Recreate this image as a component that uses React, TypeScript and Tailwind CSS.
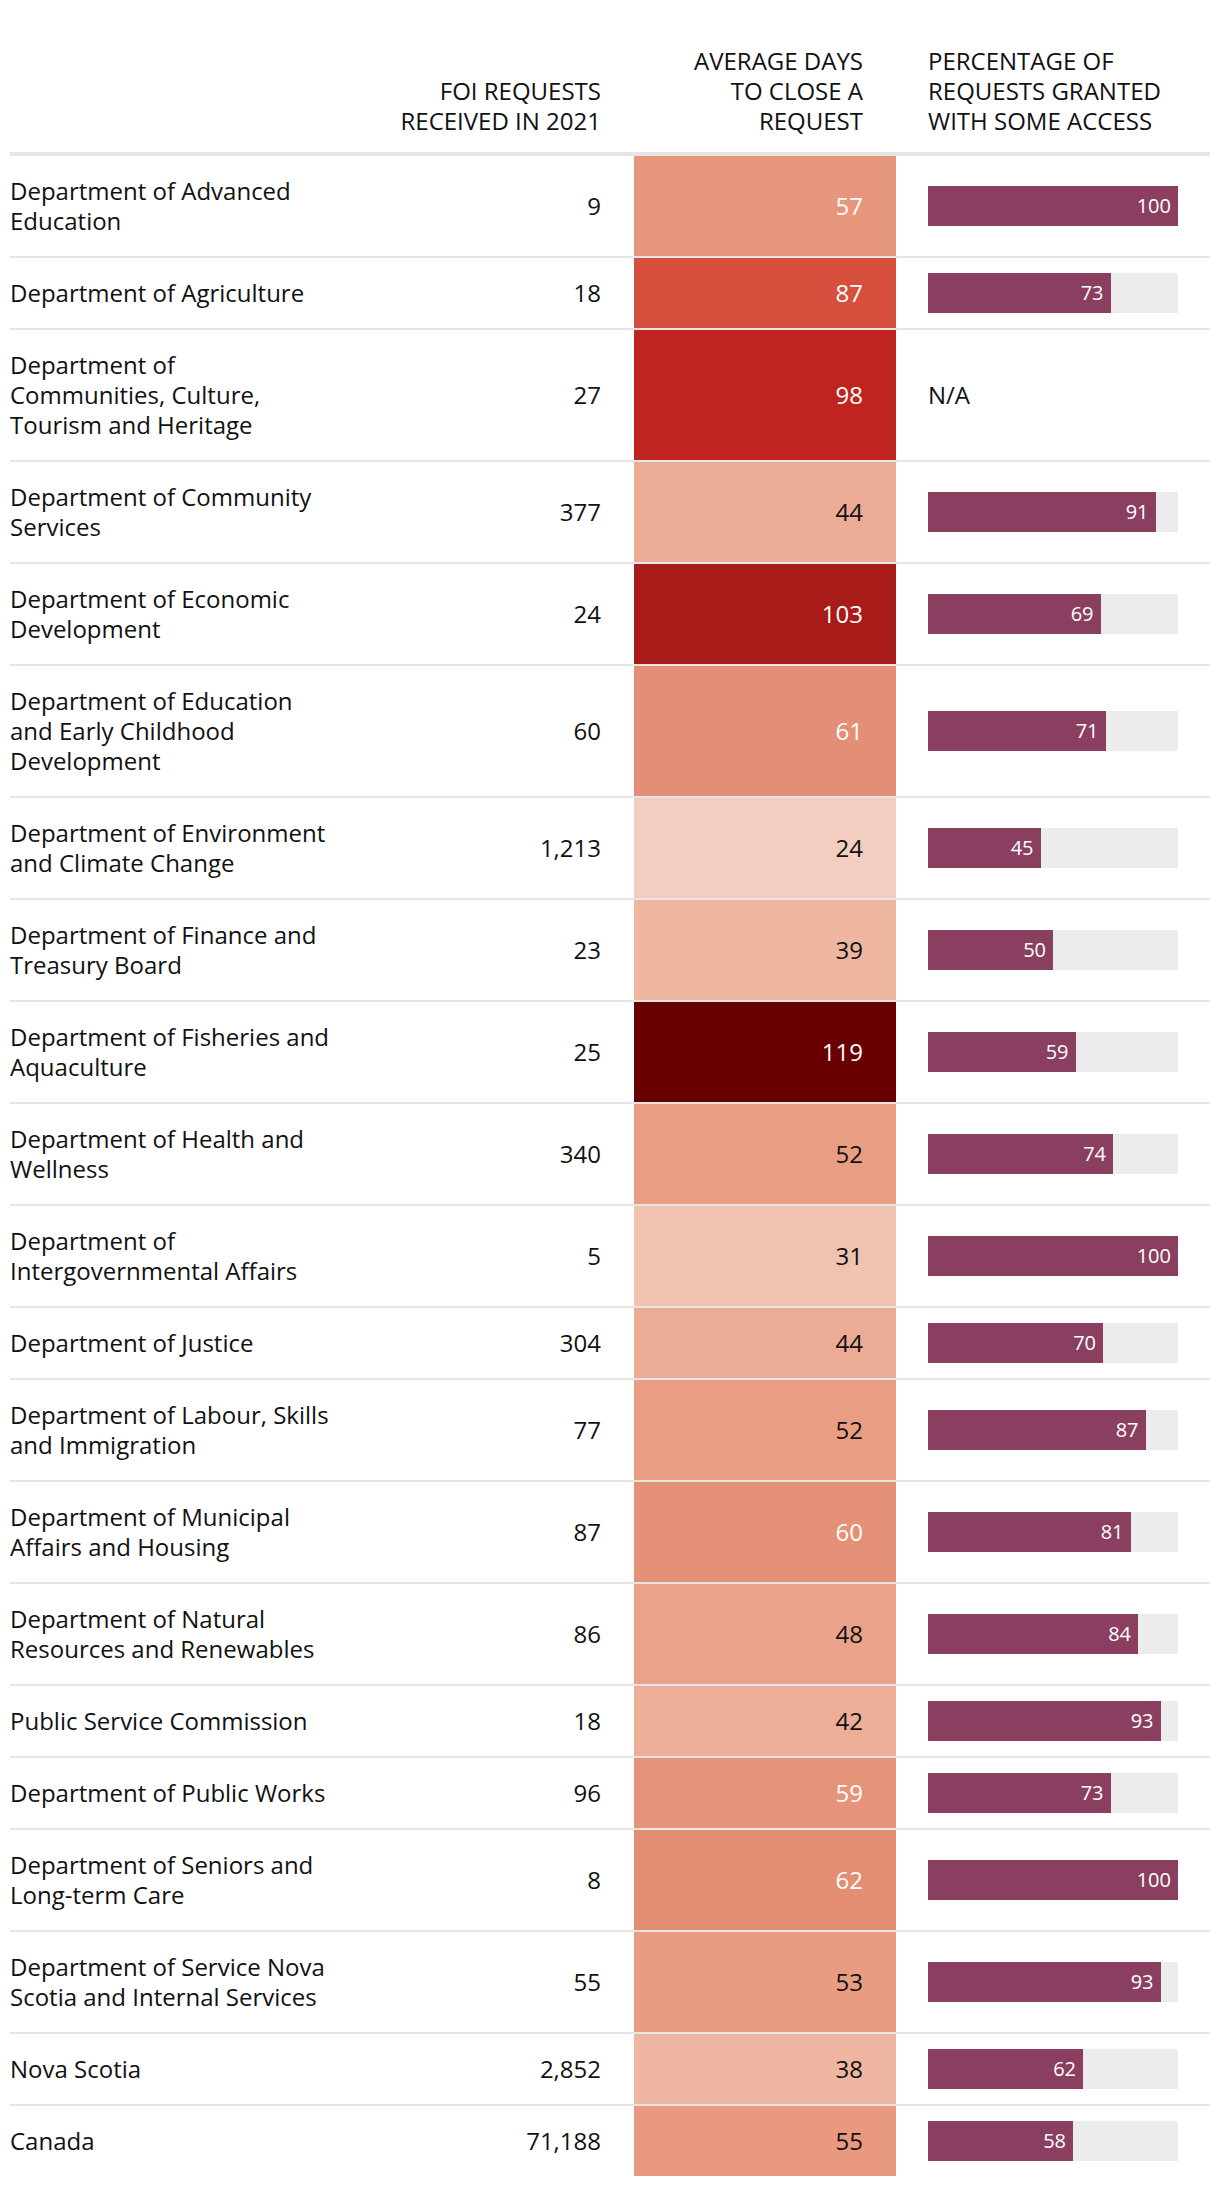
import React from "react";

type Row = {
  name: string[];
  foi: string;
  days: number;
  bg: string;
  light: boolean;
  pct: number | null;
};

const rows: Row[] = [
  { name: ["Department of Advanced", "Education"], foi: "9", days: 57, bg: "bg-[#e6967a]", light: true, pct: 100 },
  { name: ["Department of Agriculture"], foi: "18", days: 87, bg: "bg-[#d64f3c]", light: true, pct: 73 },
  { name: ["Department of", "Communities, Culture,", "Tourism and Heritage"], foi: "27", days: 98, bg: "bg-[#c0241f]", light: true, pct: null },
  { name: ["Department of Community", "Services"], foi: "377", days: 44, bg: "bg-[#ebab94]", light: false, pct: 91 },
  { name: ["Department of Economic", "Development"], foi: "24", days: 103, bg: "bg-[#a81b18]", light: true, pct: 69 },
  { name: ["Department of Education", "and Early Childhood", "Development"], foi: "60", days: 61, bg: "bg-[#e48f75]", light: true, pct: 71 },
  { name: ["Department of Environment", "and Climate Change"], foi: "1,213", days: 24, bg: "bg-[#f2cdc0]", light: false, pct: 45 },
  { name: ["Department of Finance and", "Treasury Board"], foi: "23", days: 39, bg: "bg-[#eeb59f]", light: false, pct: 50 },
  { name: ["Department of Fisheries and", "Aquaculture"], foi: "25", days: 119, bg: "bg-[#690000]", light: true, pct: 59 },
  { name: ["Department of Health and", "Wellness"], foi: "340", days: 52, bg: "bg-[#e99e84]", light: false, pct: 74 },
  { name: ["Department of", "Intergovernmental Affairs"], foi: "5", days: 31, bg: "bg-[#f0c2b0]", light: false, pct: 100 },
  { name: ["Department of Justice"], foi: "304", days: 44, bg: "bg-[#ebab94]", light: false, pct: 70 },
  { name: ["Department of Labour, Skills", "and Immigration"], foi: "77", days: 52, bg: "bg-[#e99e84]", light: false, pct: 87 },
  { name: ["Department of Municipal", "Affairs and Housing"], foi: "87", days: 60, bg: "bg-[#e49177]", light: true, pct: 81 },
  { name: ["Department of Natural", "Resources and Renewables"], foi: "86", days: 48, bg: "bg-[#eaa38a]", light: false, pct: 84 },
  { name: ["Public Service Commission"], foi: "18", days: 42, bg: "bg-[#ecae97]", light: false, pct: 93 },
  { name: ["Department of Public Works"], foi: "96", days: 59, bg: "bg-[#e59379]", light: true, pct: 73 },
  { name: ["Department of Seniors and", "Long-term Care"], foi: "8", days: 62, bg: "bg-[#e38e72]", light: true, pct: 100 },
  { name: ["Department of Service Nova", "Scotia and Internal Services"], foi: "55", days: 53, bg: "bg-[#e99c82]", light: false, pct: 93 },
  { name: ["Nova Scotia"], foi: "2,852", days: 38, bg: "bg-[#eeb6a0]", light: false, pct: 62 },
  { name: ["Canada"], foi: "71,188", days: 55, bg: "bg-[#e8997e]", light: false, pct: 58 },
];

export default function App() {
  return (
    <div className="min-h-[2186px] bg-white px-[10px] pt-[46px] font-['Open_Sans',sans-serif] text-[24px] leading-[30px] text-[#111111]">
      <div className="w-[1200px]">
        {/* Header */}
        <div className="flex border-b-4 border-[#e6e6e6] pb-4 uppercase">
          <div className="w-[330px]" />
          <div className="flex w-[294px] items-end justify-end pr-[33px] text-right">
            <div>
              FOI REQUESTS
              <br />
              RECEIVED IN 2021
            </div>
          </div>
          <div className="flex w-[262px] items-end justify-end pr-[33px] text-right">
            <div>
              AVERAGE DAYS
              <br />
              TO CLOSE A
              <br />
              REQUEST
            </div>
          </div>
          <div className="flex w-[314px] items-end pl-8">
            <div>
              PERCENTAGE OF
              <br />
              REQUESTS GRANTED
              <br />
              WITH SOME ACCESS
            </div>
          </div>
        </div>

        {/* Rows */}
        {rows.map((r, i) => (
          <div
            key={r.name.join(" ")}
            className={`flex ${i < rows.length - 1 ? "border-b-2 border-[#e6e6e6]" : ""}`}
          >
            <div className="flex w-[330px] flex-col justify-center py-5">
              {r.name.map((l) => (
                <div key={l} className="whitespace-nowrap">
                  {l}
                </div>
              ))}
            </div>
            <div className="flex w-[294px] items-center justify-end pr-[33px]">{r.foi}</div>
            <div
              className={`flex w-[262px] items-center justify-end pr-[33px] ${r.bg} ${
                r.light ? "text-white" : "text-[#111111]"
              }`}
            >
              {r.days}
            </div>
            <div className="flex w-[314px] items-center pl-8">
              {r.pct === null ? (
                <div>N/A</div>
              ) : (
                <div className="flex h-10 w-[250px] bg-[#ececec]">
                  <div
                    className="flex h-full items-center justify-end bg-[#8b3f60] pr-[7px] text-[20px] leading-none text-white"
                    style={{ width: `${r.pct}%` }}
                  >
                    {r.pct}
                  </div>
                </div>
              )}
            </div>
          </div>
        ))}
      </div>
    </div>
  );
}
